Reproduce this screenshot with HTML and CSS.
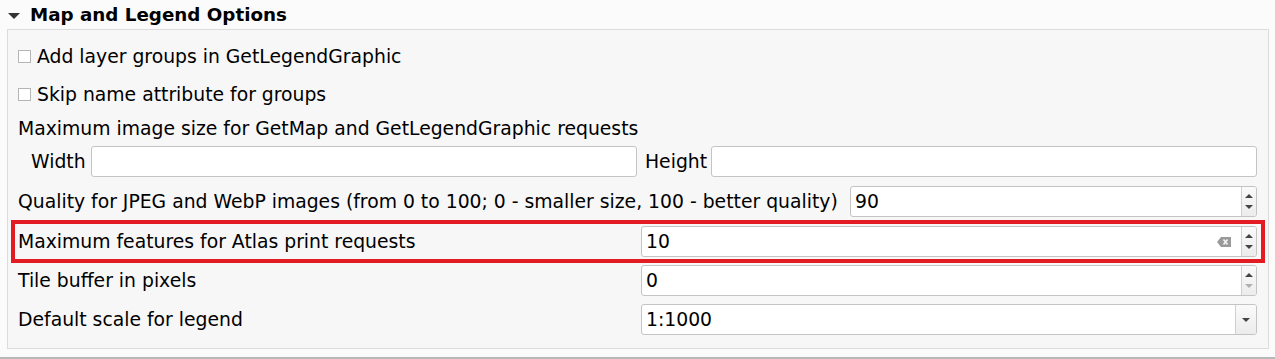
FILE: index.html
```html
<!DOCTYPE html>
<html lang="en">

<head>
    <meta charset="UTF-8" />
    <title>Map and Legend Options</title>
    <link rel="stylesheet" href="styles.css">
</head>

<body>

    <div class="group-header">
        <span class="collapse-arrow"></span>
        <h2>Map and Legend Options</h2>
    </div>

    <section class="group-box">
        <label class="check-row"><span class="checkbox"></span>Add layer groups in GetLegendGraphic</label>
        <label class="check-row"><span class="checkbox"></span>Skip name attribute for groups</label>
        <div class="caption-row">Maximum image size for GetMap and GetLegendGraphic requests</div>

        <div class="size-row">
            <span>Width</span>
            <div class="line-edit"></div>
            <span>Height</span>
            <div class="line-edit"></div>
        </div>

        <div class="quality-row">
            <span>Quality for JPEG and WebP images (from 0 to 100; 0 - smaller size, 100 - better quality)</span>
            <div class="line-edit spin">
                <span class="value">90</span>
                <span class="spin-buttons"><i class="up"></i><i class="down"></i></span>
            </div>
        </div>

        <div class="field-row highlighted">
            <span>Maximum features for Atlas print requests</span>
            <div class="line-edit spin">
                <span class="value">10</span>
                <svg class="clear-icon" width="14" height="10" viewBox="0 0 14 10">
                    <path d="M4 0H14V10H4L0 5Z" fill="#9a9a9a" />
                    <path d="M6.5 2.5L10.5 7.5M10.5 2.5L6.5 7.5" stroke="#f4f4f4" stroke-width="1.6" />
                </svg>
                <span class="spin-buttons"><i class="up"></i><i class="down"></i></span>
            </div>
        </div>

        <div class="field-row tile-row">
            <span>Tile buffer in pixels</span>
            <div class="line-edit spin">
                <span class="value">0</span>
                <span class="spin-buttons"><i class="up"></i><i class="down disabled"></i></span>
            </div>
        </div>

        <div class="field-row scale-row">
            <span>Default scale for legend</span>
            <div class="line-edit combo">
                <span class="value">1:1000</span>
                <span class="combo-button"><i class="down"></i></span>
            </div>
        </div>
    </section>

    <div class="bottom-rule"></div>

</body>

</html>
```

FILE: styles.css
```css
* {
    margin: 0;
    padding: 0;
    box-sizing: border-box;
}

body {
    background: #fbfbfb;
    color: #000;
    font-family: 'DejaVu Sans', Verdana, sans-serif;
    font-size: 18.8px;
    width: 1275px;
    height: 359px;
    overflow: hidden;
}

.group-header {
    height: 29px;
    display: flex;
    align-items: center;
    padding-left: 8px;
}

.collapse-arrow {
    width: 0;
    height: 0;
    border-left: 6px solid transparent;
    border-right: 6px solid transparent;
    border-top: 6px solid #333;
    margin-right: 10px;
    margin-top: 2px;
}

.group-header h2 {
    font-size: 18.3px;
    font-weight: bold;
    line-height: 29px;
}

.group-box {
    margin-left: 7px;
    width: 1262px;
    height: 320px;
    background: #f7f7f7;
    border: 1px solid #dcdcdc;
    padding: 7px 11px 0 10px;
    display: flex;
    flex-direction: column;
}

.check-row {
    height: 38px;
    display: flex;
    align-items: center;
    gap: 6px;
}

.checkbox {
    width: 13px;
    height: 13px;
    background: #fff;
    border: 1px solid #b5b5b5;
}

.caption-row {
    height: 30px;
    display: flex;
    align-items: center;
}

.line-edit {
    height: 31px;
    background: #fff;
    border: 1px solid #c4c4c4;
    border-radius: 3px;
    display: flex;
    align-items: center;
}

.line-edit .value {
    flex: 1;
    padding-left: 4px;
}

.size-row {
    margin-top: 3px;
    display: grid;
    grid-template-columns: 73px 1fr 74px 1fr;
    align-items: center;
}

.size-row span {
    padding-left: 13px;
}

.size-row span:nth-child(3) {
    padding-left: 8px;
}

.quality-row {
    margin-top: 9px;
    display: grid;
    grid-template-columns: 832px 1fr;
    align-items: center;
}

.field-row {
    display: grid;
    grid-template-columns: 623px 1fr;
    align-items: center;
}

.highlighted {
    margin: 3px -8px 0 -7px;
    border: 4px solid #e31b23;
    padding: 2px 4px 2px 3px;
}

.tile-row {
    margin-top: 2px;
}

.scale-row {
    margin-top: 8px;
}

.clear-icon {
    margin-right: 10px;
}

.spin-buttons,
.combo-button {
    align-self: stretch;
    width: 15px;
    border-left: 1px solid #d0d0d0;
    background: linear-gradient(to bottom, #fafafa, #ececec);
    border-radius: 0 2px 2px 0;
    display: flex;
    flex-direction: column;
    justify-content: space-around;
    align-items: center;
    padding: 4px 0;
}

.combo-button {
    width: 21px;
    justify-content: center;
}

.spin-buttons i,
.combo-button i {
    width: 0;
    height: 0;
    border-left: 4px solid transparent;
    border-right: 4px solid transparent;
}

.up {
    border-bottom: 4px solid #444;
}

.down {
    border-top: 4px solid #444;
}

.down.disabled {
    border-top-color: #b0b0b0;
}

.bottom-rule {
    margin-top: 8px;
    height: 2px;
    background: #b8b8b8;
}
```
